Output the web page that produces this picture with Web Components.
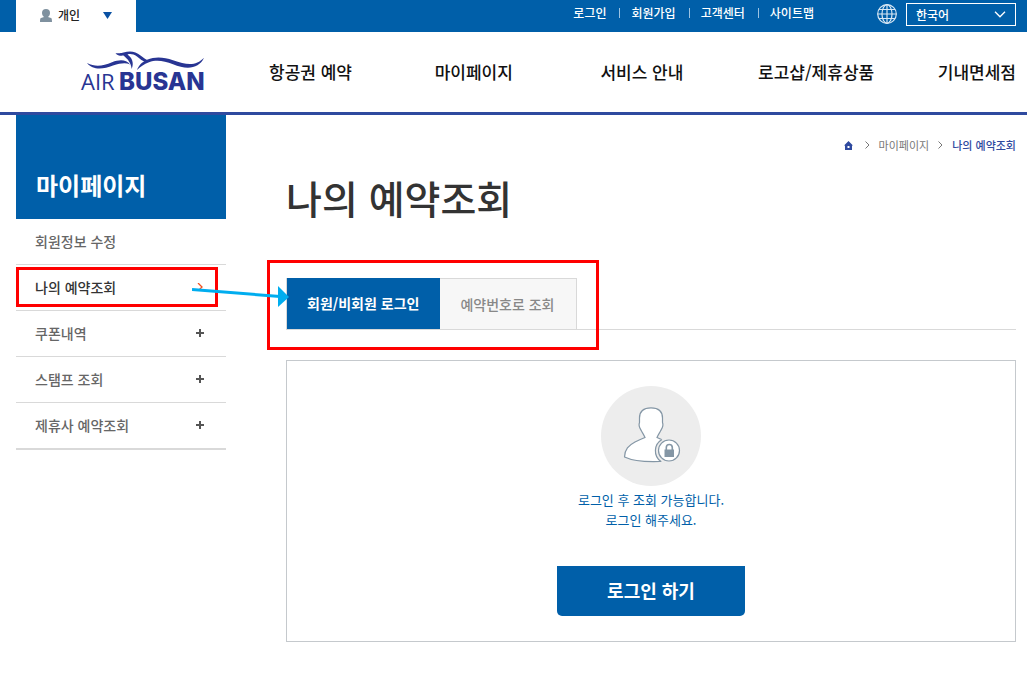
<!DOCTYPE html>
<html lang="ko">
<head>
<meta charset="utf-8">
<meta name="viewport" content="width=device-width, initial-scale=1">
<title>나의 예약조회 - AIR BUSAN</title>
<style>
  body {
    margin: 0;
    background: #fff;
    color: #333;
    font-family: "Noto Sans CJK KR", sans-serif;
    --blue: #005fa9;
    --navy: #2f4a9f;
    --line: #d9d9d9;
    --mark: #ff0000;
  }
  .content {
    display: flex;
    align-items: flex-start;
    gap: 60px;
    padding: 0 11px 40px 16px;
  }
  main {
    flex: 1;
    min-width: 0;
  }
  h1 {
    margin: 12px 0 51px;
    font-size: 39px;
    font-weight: 500;
    line-height: 60px;
  }
</style>
</head>
<body>
<top-bar>
  <a href="#login">로그인</a>
  <a href="#join">회원가입</a>
  <a href="#center">고객센터</a>
  <a href="#sitemap">사이트맵</a>
</top-bar>
<site-header>
  <a href="#ticket">항공권 예약</a>
  <a href="#mypage">마이페이지</a>
  <a href="#service">서비스 안내</a>
  <a href="#shop">로고샵/제휴상품</a>
  <a href="#dutyfree">기내면세점</a>
</site-header>
<div class="content">
  <side-menu>
    <span slot="title">마이페이지</span>
    <menu-item href="#info">회원정보 수정</menu-item>
    <menu-item href="#reservation" current>나의 예약조회</menu-item>
    <menu-item href="#coupon" more>쿠폰내역</menu-item>
    <menu-item href="#stamp" more>스탬프 조회</menu-item>
    <menu-item href="#partner" more>제휴사 예약조회</menu-item>
  </side-menu>
  <main>
    <bread-crumb>
      <a slot="parent" href="#mypage">마이페이지</a>
      <span>나의 예약조회</span>
    </bread-crumb>
    <h1>나의 예약조회</h1>
    <search-tabs>
      <span slot="first">회원/비회원 로그인</span>
      <span slot="second">예약번호로 조회</span>
    </search-tabs>
    <login-panel>
      로그인 후 조회 가능합니다.<br>로그인 해주세요.
      <span slot="action">로그인 하기</span>
    </login-panel>
  </main>
</div>

<script>
// attach an open shadow root and fill it
function render(el, html) {
  el.attachShadow({ mode: "open" }).innerHTML = html;
}

// top-bar
class TopBar extends HTMLElement {
  constructor() {
    super();
    render(this, /* html */ `
<style>
  :host {
    display: flex;
    align-items: flex-start;
    height: 32px;
    padding: 0 11px 0 16px;
    background: var(--blue);
    font-size: 12px;
  }
  .account {
    display: flex;
    align-items: center;
    width: 120px;
    height: 32px;
    padding: 0 24px 2px;
    border: 0;
    background: #fff;
    color: #222;
    font: 500 12px/20px "Noto Sans CJK KR", sans-serif;
  }
  .account span {
    flex: 1;
    margin-left: 6px;
    text-align: left;
  }
  nav {
    display: flex;
    margin-left: auto;
    line-height: 26px;
  }
  ::slotted(a) {
    color: #fff;
    font-weight: 500;
    text-decoration: none;
    padding: 0 13px 0 12px;
    background: linear-gradient(#9cc3e2, #9cc3e2) no-repeat left 8px / 1px 10px;
  }
  ::slotted(a:first-child) {
    background: none;
  }
  .globe {
    margin: 4px 9px 0 50px;
  }
  .lang {
    display: grid;
    align-items: center;
    margin-top: 3px;
  }
  .lang > * {
    grid-area: 1 / 1;
  }
  select {
    appearance: none;
    width: 110px;
    height: 23px;
    padding: 0 9px;
    border: 1px solid #fff;
    border-radius: 0;
    background: var(--blue);
    color: #fff;
    font: 500 12px/20px "Noto Sans CJK KR", sans-serif;
  }
  .lang svg {
    justify-self: end;
    margin-right: 10px;
    pointer-events: none;
  }
</style>
<button class="account" type="button">
  <svg width="12" height="13" viewBox="0 0 12 13" fill="#7f919f">
    <path d="M6 0a4 4 0 0 1 4 4c0 2-1 3.200-2 4l3 1c.7.300 1 1 1 4H0c0-3 .3-3.700 1-4l3-1C3 7.200 2 6 2 4a4 4 0 0 1 4-4z"/>
  </svg>
  <span>개인</span>
  <svg width="9" height="7" viewBox="0 0 9 7"><path d="M0 0h9L4.500 7z" fill="#0a51a3"/></svg>
</button>
<nav><slot></slot></nav>
<svg class="globe" width="20" height="20" viewBox="0 0 20 20" fill="none" stroke="#d7e7f4" stroke-width="1.200">
  <circle cx="10" cy="10" r="9.300"/>
  <ellipse cx="10" cy="10" rx="5" ry="9.300"/>
  <path d="M10 .5v19M.5 10h19M2 5.500h16M2 14.500h16"/>
</svg>
<div class="lang">
  <select aria-label="언어 선택">
    <option>한국어</option>
    <option>English</option>
  </select>
  <svg width="12" height="7" viewBox="0 0 12 7" fill="none" stroke="#fff" stroke-width="1.300"><path d="M1 .8l5 5 5-5"/></svg>
</div>`);
  }
}

// site-header: logo and main navigation
class SiteHeader extends HTMLElement {
  constructor() {
    super();
    render(this, /* html */ `
<style>
  :host {
    display: flex;
    height: 80px;
    padding: 0 11px 0 80px;
    border-bottom: 3px solid var(--navy);
  }
  .logo {
    margin: 18px 59px 0 0;
  }
  svg {
    display: block;
  }
  nav {
    flex: 1;
    display: grid;
    grid-template-columns: 165fr 165fr 157fr 179fr auto;
    line-height: 80px;
  }
  ::slotted(a) {
    color: #111;
    font-size: 17px;
    font-weight: 500;
    text-decoration: none;
    white-space: nowrap;
  }
</style>
<a class="logo" href="#home" aria-label="AIR BUSAN">
  <svg width="130" height="52" viewBox="0 0 130 52" fill="#283593">
    <path d="M7 13c9 4.500 16 2.800 25-.8 8-3 14-2.800 18 2.300-4-1.800-9-1.500-17 1-10 4-20 5-26-2.500z"/>
    <path d="M35.500 3.200c4-.2 5 .1 8-.8 7-2 12-1 17 3 3 2.300 5 4 8.500 5.100l-2.500 1.800c-4-1-6.500-3.500-9.500-5.800-3.500-2.400-6.500-2.900-9.500-2.100 4 3 7 7.500 4.200 14.600-.9-6-3.500-9.500-8.200-13.400-3 .4-6 0-8-2.400z"/>
    <path d="M57 20c1.500-4 5-8.200 10-10.200 9-3.500 17-2.400 26 .5 14 5 23 5.900 31-2.500-5 11-17 12.300-31 6.500-9-3.600-17-4.700-24-2-5 2-9 4.500-12 7.700z"/>
    <text x="1" y="40" font-family="Open Sans, sans-serif" font-size="22" font-weight="400">AIR</text>
    <text x="39" y="40" font-family="Inter, sans-serif" font-size="24" font-weight="800">BUSAN</text>
  </svg>
</a>
<nav><slot></slot></nav>`);
  }
}

// side-menu
class SideMenu extends HTMLElement {
  constructor() {
    super();
    render(this, /* html */ `
<style>
  :host {
    display: block;
    flex: 0 0 210px;
  }
  h2 {
    margin: 0;
    padding: 52px 20px 16px;
    background: var(--blue);
    color: #fff;
    font-size: 24px;
    font-weight: 700;
    line-height: 36px;
  }
  nav {
    border-bottom: 1px solid var(--line);
  }
</style>
<h2><slot name="title"></slot></h2>
<nav><slot></slot></nav>`);
  }
}

// menu-item: "more" shows a plus, "current" a chevron with the highlight and arrow
class MenuItem extends HTMLElement {
  constructor() {
    super();
    let href = this.getAttribute("href");
    let icon = "";
    if (this.hasAttribute("more")) {
      icon = `<svg width="8" height="8" viewBox="0 0 8 8"><path d="M4 0v8M0 4h8" stroke="#555" stroke-width="2"/></svg>`;
    }
    if (this.hasAttribute("current")) {
      icon = `<svg width="8" height="8" viewBox="0 0 8 8"><path d="M2 0l4 4-4 4" fill="none" stroke="#f4511e" stroke-width="1.300"/></svg>`;
    }
    render(this, /* html */ `
<style>
  :host {
    display: block;
    position: relative;
    border-bottom: 1px solid var(--line);
  }
  a {
    display: flex;
    align-items: center;
    justify-content: space-between;
    padding: 0 22px 1px 19px;
    color: #666;
    font-size: 14px;
    font-weight: 500;
    line-height: 44px;
    text-decoration: none;
  }
  :host([current]) a {
    color: #333;
  }
  .frame, .arrow {
    display: none;
    position: absolute;
    pointer-events: none;
  }
  :host([current]) :is(.frame, .arrow) {
    display: block;
  }
  .frame {
    inset: 2px 8px 3px 0;
    border: 3px solid var(--mark);
  }
  .arrow {
    left: 176px;
    top: 20px;
    z-index: 2;
  }
</style>
<a href="${href}"><slot></slot>${icon}</a>
<div class="frame"></div>
<svg class="arrow" width="98" height="24" viewBox="0 0 98 24">
  <path d="M0 4.500L88 11.500" stroke="#00adef" stroke-width="3"/>
  <path d="M86 1l11 11-11 10z" fill="#00adef"/>
</svg>`);
  }
}

// bread-crumb
class BreadCrumb extends HTMLElement {
  constructor() {
    super();
    render(this, /* html */ `
<style>
  :host {
    display: flex;
    align-items: center;
    justify-content: flex-end;
    gap: 9px;
    padding-top: 20px;
    color: var(--navy);
    font-size: 11px;
    font-weight: 500;
    line-height: 20px;
  }
  .home {
    display: flex;
    margin-right: 3px;
  }
  ::slotted(a) {
    color: #777;
    font-weight: 400;
    text-decoration: none;
  }
</style>
<a class="home" href="#home" aria-label="홈">
  <svg width="9" height="9" viewBox="0 0 9 9" fill="#2f4a9f"><path d="M4.500 0L9 4.500H8V9H1V4.500H0zM3.500 5v2h2V5z"/></svg>
</a>
<svg width="5" height="8" viewBox="0 0 5 8" fill="none" stroke="#777"><path d="M.5.5L4 4 .5 7.500"/></svg>
<slot name="parent"></slot>
<svg width="5" height="8" viewBox="0 0 5 8" fill="none" stroke="#777"><path d="M.5.5L4 4 .5 7.500"/></svg>
<slot></slot>`);
  }
}

// search-tabs
class SearchTabs extends HTMLElement {
  constructor() {
    super();
    render(this, /* html */ `
<style>
  :host {
    display: flex;
    border-bottom: 1px solid var(--line);
  }
  .tabs {
    display: flex;
    position: relative;
  }
  button {
    height: 51px;
    padding: 0 21px 1px 20px;
    border: 1px solid var(--line);
    border-width: 1px 1px 0 0;
    background: #f7f7f7;
    color: #888;
    font: 500 14px/20px "Noto Sans CJK KR", sans-serif;
  }
  button[aria-selected="true"] {
    border-width: 0 0 0 1px;
    background: var(--blue);
    color: #fff;
    font-weight: 700;
  }
  .frame {
    position: absolute;
    inset: -18px -22px -21px -19px;
    border: 3px solid var(--mark);
    pointer-events: none;
  }
</style>
<div class="tabs" role="tablist">
  <button type="button" role="tab" aria-selected="true"><slot name="first"></slot></button>
  <button type="button" role="tab" aria-selected="false"><slot name="second"></slot></button>
  <div class="frame"></div>
</div>`);
  }

  connectedCallback() {
    let tabs = this.shadowRoot.querySelectorAll("button");
    tabs.forEach((tab) => {
      tab.addEventListener("click", () => {
        tabs.forEach((t) => t.setAttribute("aria-selected", t === tab));
      });
    });
  }
}

// login-panel
class LoginPanel extends HTMLElement {
  constructor() {
    super();
    render(this, /* html */ `
<style>
  :host {
    display: flex;
    flex-direction: column;
    align-items: center;
    margin-top: 30px;
    padding: 25px 20px;
    border: 1px solid #c5c9cd;
  }
  p {
    margin: 4px 0 36px;
    color: var(--blue);
    font-size: 13px;
    line-height: 20px;
    text-align: center;
  }
  button {
    width: 188px;
    height: 50px;
    padding: 0 0 2px;
    border: 0;
    border-radius: 0 0 5px 5px;
    background: var(--blue);
    color: #fff;
    font: 700 18px/28px "Noto Sans CJK KR", sans-serif;
  }
</style>
<svg width="100" height="100" viewBox="0 0 100 100">
  <circle cx="50" cy="50" r="50" fill="#ededed"/>
  <path d="M50 21.800c8 0 11.500 4.200 11.500 10.200v4.500c1.500 3.500-.5 6-2 8.500-1 2-2.500 4-3.500 6.500l5.500 2.500 6.500 21.500H59c-13 .5-27-.5-35.500-4.500.3-8 4-11.500 10.500-15 4-2 7.500-3.500 10-4.500-1-2.500-2.500-4.500-3.500-6.500-1.500-2.500-3.500-5-2-8.500V32c0-6 3.500-10.200 11.500-10.200z" fill="#fff" stroke="#8496a5" stroke-width="1.200"/>
  <circle cx="68" cy="64.500" r="13.500" fill="#ededed"/>
  <path d="M61 53.500a13 13 0 0 0-1 22" fill="none" stroke="#8496a5" stroke-width="1.200"/>
  <circle cx="68" cy="64.500" r="10.500" fill="#fff" stroke="#8496a5" stroke-width="1.200"/>
  <path d="M63.500 63.500h9.500V71h-9.500z" fill="#8496a5"/>
  <path d="M65.300 64v-2.500a3 3 0 0 1 6 0V64" fill="none" stroke="#8496a5" stroke-width="1.600"/>
</svg>
<p><slot></slot></p>
<button type="button"><slot name="action"></slot></button>`);
  }
}

customElements.define("top-bar", TopBar);
customElements.define("site-header", SiteHeader);
customElements.define("side-menu", SideMenu);
customElements.define("menu-item", MenuItem);
customElements.define("bread-crumb", BreadCrumb);
customElements.define("search-tabs", SearchTabs);
customElements.define("login-panel", LoginPanel);
</script>
</body>
</html>
